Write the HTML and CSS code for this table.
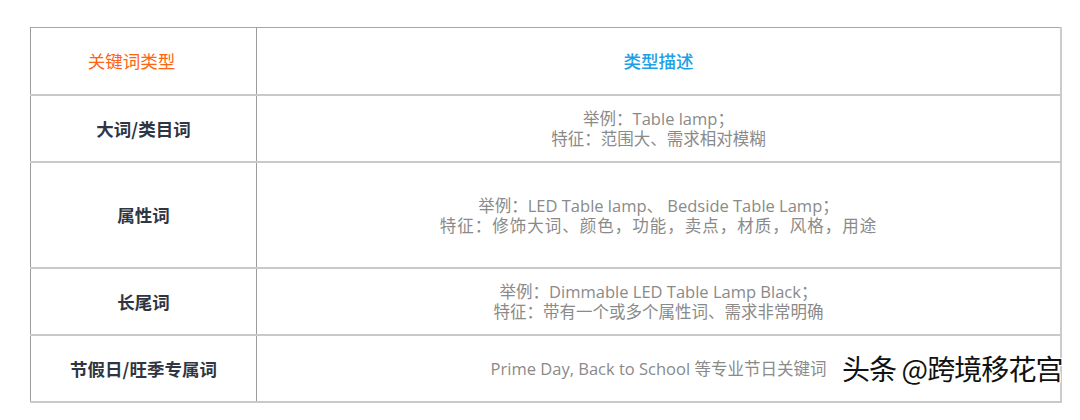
FILE: index.html
```html
<!DOCTYPE html>
<html lang="zh-CN">
<head>
<meta charset="utf-8">
<link rel="stylesheet" href="styles.css">
</head>
<body>
<div class="page">
  <table class="kw-table">
    <colgroup><col class="col-type"><col class="col-desc"></colgroup>
    <thead>
      <tr>
        <th class="h-type">关键词类型</th>
        <th class="h-desc">类型描述</th>
      </tr>
    </thead>
    <tbody>
      <tr class="row-s">
        <td class="name">大词/类目词</td>
        <td class="desc"><div class="line">举例：Table lamp；</div><div class="line">特征：范围大、需求相对模糊</div></td>
      </tr>
      <tr class="row-l">
        <td class="name">属性词</td>
        <td class="desc"><div class="line">举例：LED Table lamp、 Bedside Table Lamp；</div><div class="line wide">特征：修饰大词、颜色，功能，卖点，材质，风格，用途</div></td>
      </tr>
      <tr class="row-s">
        <td class="name">长尾词</td>
        <td class="desc"><div class="line">举例：Dimmable LED Table Lamp Black；</div><div class="line">特征：带有一个或多个属性词、需求非常明确</div></td>
      </tr>
      <tr class="row-s">
        <td class="name">节假日/旺季专属词</td>
        <td class="desc"><div class="line">Prime Day, Back to School 等专业节日关键词</div></td>
      </tr>
    </tbody>
  </table>
  <div class="watermark">头条 @跨境移花宫</div>
</div>
</body>
</html>
```

FILE: styles.css
```css
html, body {
  margin: 0;
  padding: 0;
  background: #ffffff;
}
.page {
  position: relative;
  width: 1080px;
  height: 420px;
  padding: 27px 0 0 30px;
  box-sizing: border-box;
  font-family: "Open Sans", "Noto Sans CJK SC", sans-serif;
}
.kw-table {
  width: 1032px;
  border-collapse: collapse;
  table-layout: fixed;
  border-top: 1px solid #a6a6a6;
  border-left: 1px solid #9c9c9c;
  border-right: 2px solid #cccccc;
}
.col-type { width: 226px; }
.kw-table th,
.kw-table td {
  text-align: center;
  vertical-align: middle;
  padding: 0;
  border-bottom: 2px solid #c9c9c9;
}
.kw-table th:first-child,
.kw-table td:first-child {
  border-right: 1px solid #9c9c9c;
}
.kw-table thead tr { height: 67px; }
.h-type {
  color: #ff6410;
  font-weight: 400;
  font-size: 17.5px;
  font-family: "Noto Sans CJK SC", sans-serif;
  padding-right: 24px !important;
}
.h-desc {
  color: #1ea0e6;
  font-weight: 500;
  font-size: 17.5px;
  font-family: "Noto Sans CJK SC", sans-serif;
}
.row-s { height: 67px; }
.row-l { height: 106px; }
.name {
  color: #2f3542;
  font-weight: 700;
  font-size: 17.5px;
  font-family: "Noto Sans CJK SC", sans-serif;
}
.desc {
  color: #8a8a8a;
  font-size: 16.5px;
  font-family: "Open Sans", "Noto Sans CJK SC", sans-serif;
}
.line {
  line-height: 21px;
  height: 20px;
  overflow: visible;
}
.line.wide {
  letter-spacing: 1px;
}
.watermark {
  position: absolute;
  left: 842px;
  top: 350px;
  font-family: "Noto Sans CJK SC", sans-serif;
  font-size: 28px;
  line-height: 36px;
  color: #111111;
  letter-spacing: -0.9px;
  text-shadow: 1px 0 0 #fff, -1px 0 0 #fff, 0 1px 0 #fff, 0 -1px 0 #fff, 1px 1px 0 #fff, -1px -1px 0 #fff, 1px -1px 0 #fff, -1px 1px 0 #fff;
}
```
